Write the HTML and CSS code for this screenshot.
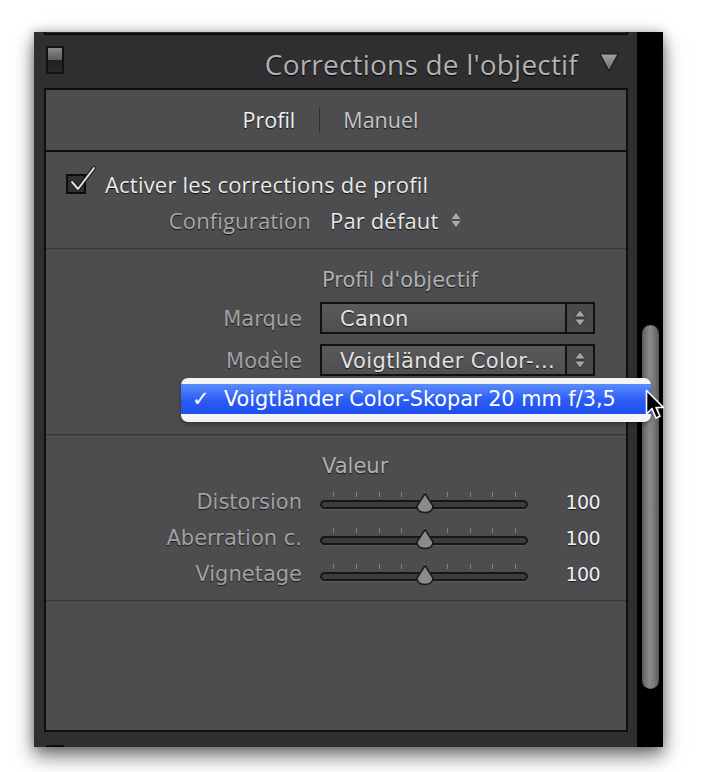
FILE: index.html
```html
<!DOCTYPE html>
<html lang="fr">
<head>
<meta charset="utf-8">
<title>Corrections de l'objectif</title>
<link rel="stylesheet" href="styles.css">
</head>
<body>
<div class="stage">
  <div class="window">
    <div class="main">
      <div class="prev"></div>
      <div class="header">
        <div class="toggle"><span class="t-top"></span><span class="t-bot"></span></div>
        <div class="title">Corrections de l'objectif</div>
        <svg class="disclosure" width="20" height="20" viewBox="0 0 20 20">
          <defs><linearGradient id="dg" x1="0" y1="0" x2="0" y2="1"><stop offset="0" stop-color="#a2a2a2"/><stop offset="1" stop-color="#6c6c6c"/></linearGradient></defs>
          <polygon points="1,2 19,2 10,19" fill="url(#dg)" stroke="#1b1b1d" stroke-width="1.2" stroke-linejoin="round"/>
        </svg>
      </div>
      <div class="panel">
        <div class="tabs">
          <span class="tab active">Profil</span>
          <span class="tab-sep"></span>
          <span class="tab">Manuel</span>
        </div>
        <div class="sec sec1">
          <div class="check-row">
            <span class="checkbox">
              <svg class="tick" width="30" height="30" viewBox="0 0 30 30"><path d="M5 16 L11 23 L27 2" fill="none" stroke="#1a1a1a" stroke-width="4" stroke-linecap="round" stroke-linejoin="round"/><path d="M5 16 L11 23 L27 2" fill="none" stroke="#e4e4e4" stroke-width="2" stroke-linecap="round" stroke-linejoin="round"/></svg>
            </span>
            <span class="check-label">Activer les corrections de profil</span>
          </div>
          <div class="config-row">
            <span class="config-label">Configuration</span>
            <span class="config-val">Par défaut</span>
            <svg class="mini-step" width="10" height="18" viewBox="0 0 10 18"><polygon points="5,2 9.5,8 0.5,8" fill="#a9a9a9"/><polygon points="0.5,10 9.5,10 5,16" fill="#a9a9a9"/></svg>
          </div>
        </div>
        <div class="sec sec2">
          <div class="sec-title">Profil d'objectif</div>
          <div class="row">
            <span class="label">Marque</span>
            <div class="select">
              <span class="select-text">Canon</span>
              <span class="select-step"><svg width="14" height="22" viewBox="0 0 14 22"><polygon points="7,3 12.5,10 1.5,10" fill="#a5a5a5" stroke="#2a2a2a" stroke-width="0.8" stroke-linejoin="round"/><polygon points="1.5,12 12.5,12 7,19" fill="#a5a5a5" stroke="#2a2a2a" stroke-width="0.8" stroke-linejoin="round"/></svg></span>
            </div>
          </div>
          <div class="row">
            <span class="label">Modèle</span>
            <div class="select">
              <span class="select-text">Voigtländer Color-...</span>
              <span class="select-step"><svg width="14" height="22" viewBox="0 0 14 22"><polygon points="7,3 12.5,10 1.5,10" fill="#a5a5a5" stroke="#2a2a2a" stroke-width="0.8" stroke-linejoin="round"/><polygon points="1.5,12 12.5,12 7,19" fill="#a5a5a5" stroke="#2a2a2a" stroke-width="0.8" stroke-linejoin="round"/></svg></span>
            </div>
          </div>
          <div class="popup">
            <div class="popup-item"><span class="popup-check">✓</span><span class="popup-text">Voigtländer Color-Skopar 20 mm f/3,5</span></div>
          </div>
        </div>
        <div class="sec sec3">
          <div class="sec-title">Valeur</div>
          <div class="srow">
            <span class="label">Distorsion</span>
            <div class="slider"><div class="ticks"><i></i><i></i><i></i><i></i><i></i><i></i><i></i><i></i><i></i></div><div class="track"></div><svg class="knob" width="22" height="22" viewBox="0 0 22 22"><path d="M11 1.5 L19 14 Q19 20.5 11 20.5 Q3 20.5 3 14 Z" fill="#8b8b8b" stroke="#1c1c1c" stroke-width="1.6" stroke-linejoin="round"/></svg></div>
            <span class="val">100</span>
          </div>
          <div class="srow">
            <span class="label">Aberration c.</span>
            <div class="slider"><div class="ticks"><i></i><i></i><i></i><i></i><i></i><i></i><i></i><i></i><i></i></div><div class="track"></div><svg class="knob" width="22" height="22" viewBox="0 0 22 22"><path d="M11 1.5 L19 14 Q19 20.5 11 20.5 Q3 20.5 3 14 Z" fill="#8b8b8b" stroke="#1c1c1c" stroke-width="1.6" stroke-linejoin="round"/></svg></div>
            <span class="val">100</span>
          </div>
          <div class="srow">
            <span class="label">Vignetage</span>
            <div class="slider"><div class="ticks"><i></i><i></i><i></i><i></i><i></i><i></i><i></i><i></i><i></i></div><div class="track"></div><svg class="knob" width="22" height="22" viewBox="0 0 22 22"><path d="M11 1.5 L19 14 Q19 20.5 11 20.5 Q3 20.5 3 14 Z" fill="#8b8b8b" stroke="#1c1c1c" stroke-width="1.6" stroke-linejoin="round"/></svg></div>
            <span class="val">100</span>
          </div>
        </div>
        <div class="rest"></div>
      </div>
      <div class="footer"><span class="foot-mark"></span></div>
    </div>
    <div class="rail"><div class="thumb"></div></div>
  </div>
  <svg class="cursor" width="22" height="36" viewBox="0 0 22 36">
    <path d="M1.5 1.5 L1.5 25 L7 19.5 L11 29 L15 27.3 L11 18.5 L18.5 18.5 Z" fill="#000" stroke="#fff" stroke-width="1.6" stroke-linejoin="round"/>
  </svg>
</div>
</body>
</html>
```

FILE: styles.css
```css
* { box-sizing: border-box; }
html, body { margin: 0; padding: 0; background: #ffffff; }
body { width: 706px; height: 772px; overflow: hidden; font-family: "DejaVu Sans", sans-serif; }

.stage { position: relative; padding: 32px 0 0 34px; }

.window {
  display: flex;
  width: 629px;
  height: 715px;
  box-shadow: 0 9px 18px rgba(0,0,0,0.55), 0 0 10px rgba(0,0,0,0.25);
}

.main {
  width: 603px;
  background: #2f2f32;
  padding: 0 9px 0 10px;
  display: flex;
  flex-direction: column;
}

.prev {
  height: 3px;
  border: 2px solid #0c0c0d;
  border-top: none;
  background: #2f2f32;
}

.header {
  height: 53px;
  display: flex;
  align-items: center;
  padding: 0 9px 0 2px;
}

.toggle {
  width: 18px;
  height: 28px;
  border: 2px solid #111;
  display: flex;
  flex-direction: column;
  margin-top: -2px;
}
.t-top { flex: 1; background: linear-gradient(#8a8a8a, #5b5b5b); }
.t-bot { flex: 1; background: linear-gradient(#1f1f21, #2b2b2e); }

.title {
  flex: 1;
  text-align: right;
  font-family: "Open Sans", sans-serif;
  font-size: 28px;
  letter-spacing: 0.2px;
  color: #b2b2b2;
  text-shadow: 0 1px 1px #000;
  padding-right: 21px;
  line-height: 30px;
  margin-top: 5px;
}
.disclosure { display: block; margin-top: 2px; }

.panel {
  border: 2px solid #0e0e0f;
  background: #4d4d4f;
  height: 645px;
  display: flex;
  flex-direction: column;
}

.tabs {
  height: 62px;
  border-bottom: 2px solid #0e0e0f;
  display: flex;
  align-items: center;
  justify-content: center;
  font-family: "Open Sans", sans-serif;
  font-size: 21.5px;
  padding-right: 11px;
  text-shadow: 0 1px 1px #111;
}
.tab { color: #c7c7c7; }
.tab.active { color: #f2f2f2; }
.tab-sep { width: 1px; height: 24px; background: #2e2e30; margin: 0 23px 0 24px; }

.sec {
  border-bottom: 2px solid #3d3d3f;
  box-shadow: 0 1px 0 #58585a;
  position: relative;
}

.sec1 { height: 98px; padding: 20px 0 0 20px; }
.check-row { display: flex; align-items: center; height: 24px; }
.checkbox {
  position: relative;
  width: 20px;
  height: 20px;
  border: 2px solid #0d0d0d;
  background: #303032;
}
.tick { position: absolute; left: -1px; top: -10px; }
.check-label {
  margin-left: 19px;
  font-family: "Open Sans", sans-serif;
  font-size: 22px;
  letter-spacing: 0.2px;
  color: #ebebeb;
  text-shadow: 0 1px 1px #111;
}
.config-row {
  display: flex;
  align-items: center;
  height: 24px;
  margin-top: 12px;
  margin-left: -20px;
  font-family: "Open Sans", sans-serif;
  font-size: 22px;
  letter-spacing: 0.15px;
  text-shadow: 0 1px 1px #111;
}
.config-label { width: 265px; text-align: right; color: #a9a9a9; }
.config-val { margin-left: 19px; color: #e8e8e8; }
.mini-step { margin-left: 13px; }

.sec2 { height: 186px; padding-top: 18px; }
.sec-title {
  margin-left: 276px;
  height: 24px;
  line-height: 24px;
  font-size: 21px;
  color: #b0b0b0;
  text-shadow: 0 1px 1px #1a1a1a;
}
.row { display: flex; align-items: center; height: 32px; margin-top: 10px; }
.label {
  width: 256px;
  text-align: right;
  font-size: 21px;
  color: #a2a2a2;
  text-shadow: 0 1px 1px #1a1a1a;
  flex: none;
}
.row .label { padding-top: 3px; }
.select {
  margin-left: 18px;
  width: 275px;
  height: 32px;
  display: flex;
  border: 2px solid #111;
  background: linear-gradient(#5a5a5c, #4f4f51);
}
.select-text {
  flex: 1;
  padding-left: 18px;
  line-height: 30px;
  font-size: 21px;
  letter-spacing: 0.35px;
  color: #e2e2e2;
  text-shadow: 0 1px 1px #1a1a1a;
  white-space: nowrap;
  overflow: hidden;
}
.select-step {
  width: 28px;
  border-left: 2px solid #111;
  display: flex;
  align-items: center;
  justify-content: center;
  background: #4a4a4c;
}

.popup {
  position: absolute;
  left: 135px;
  top: 128px;
  width: 470px;
  height: 44px;
  background: #f4f4f4;
  border-radius: 7px;
  padding-top: 6px;
  box-shadow: 0 2px 4px rgba(0,0,0,0.35);
  z-index: 2;
}
.popup-item {
  height: 30px;
  background: linear-gradient(#5b8cfd, #2a5cf5 55%, #1e4ff0);
  display: flex;
  align-items: center;
  color: #ffffff;
  font-size: 20.8px;
}
.popup-check { margin-left: 11px; width: 32px; font-size: 21px; }
.popup-text { white-space: nowrap; }

.sec3 { height: 166px; padding-top: 18px; }
.sec3 .sec-title { margin-bottom: 6px; }
.srow { display: flex; align-items: center; height: 36px; }
.slider {
  position: relative;
  margin-left: 18px;
  width: 208px;
  height: 22px;
  flex: none;
  margin-top: 2px;
}
.ticks {
  position: absolute;
  left: 13px;
  right: 12px;
  top: 0;
  height: 5px;
  display: flex;
  justify-content: space-between;
}
.ticks i { width: 1px; height: 5px; background: #808082; }
.track {
  position: absolute;
  left: 0;
  right: 0;
  top: 8px;
  height: 9px;
  border: 2px solid #161617;
  border-radius: 5px;
  background: #3c3c3e;
  box-shadow: 0 1px 0 #5c5c5e;
}
.knob { position: absolute; left: 94px; top: 0; }
.val {
  width: 72px;
  text-align: right;
  font-size: 19px;
  letter-spacing: -0.6px;
  color: #f0f0f0;
  text-shadow: 0 1px 1px #1a1a1a;
}

.rest { flex: 1; }

.footer { height: 15px; position: relative; }
.foot-mark { position: absolute; left: 2px; bottom: 0; width: 18px; height: 2px; background: #0c0c0c; }

.rail {
  width: 26px;
  background: #000;
  padding: 293px 0 0 5px;
}
.thumb {
  width: 17px;
  height: 364px;
  border-radius: 9px;
  background: linear-gradient(90deg, #5e5e60, #8a8a8c 45%, #7a7a7c 70%, #59595b);
  box-shadow: inset 0 0 1px #222;
}

.cursor { position: absolute; left: 645px; top: 389px; z-index: 5; }
```
